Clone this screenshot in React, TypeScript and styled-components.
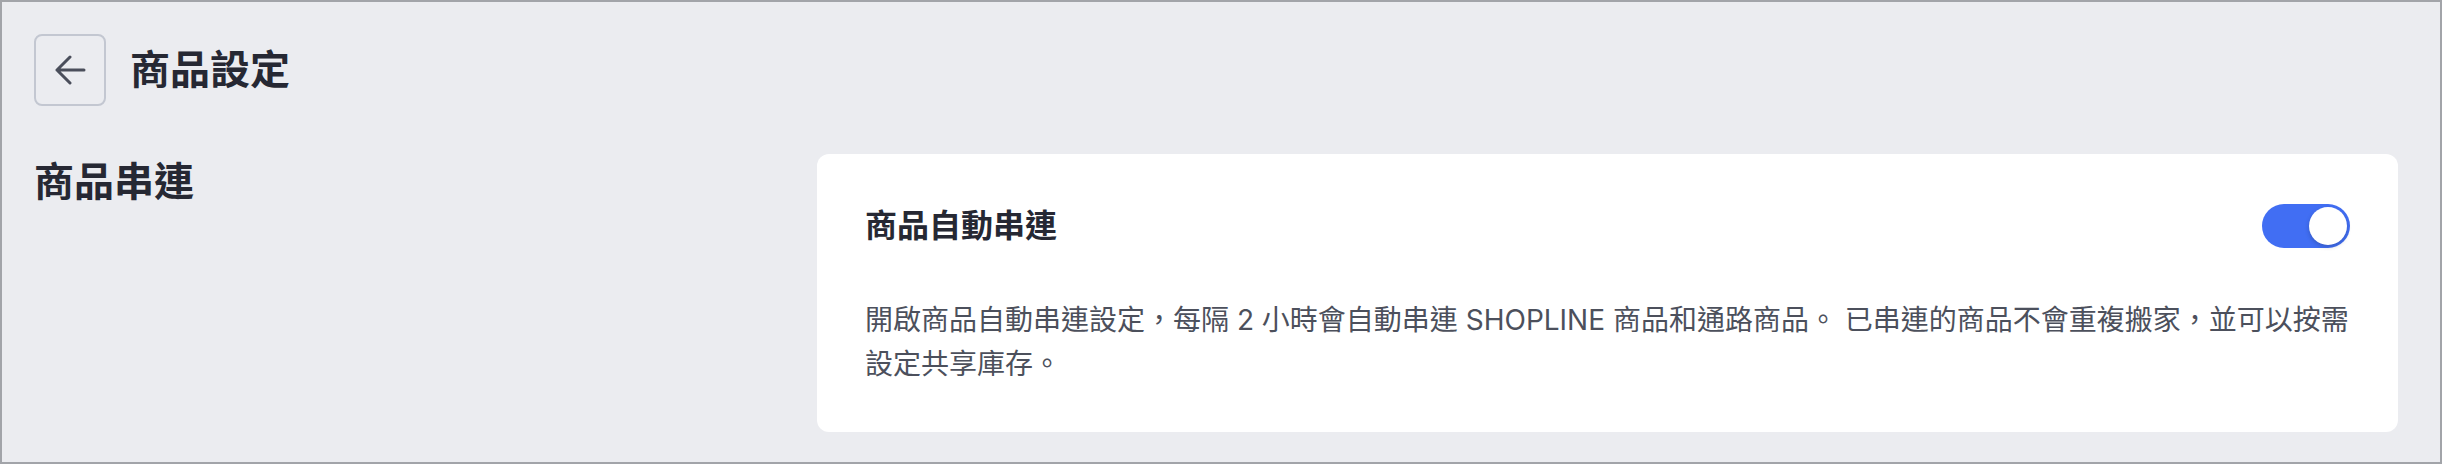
import React, { useState } from "react";
import styled, { createGlobalStyle } from "styled-components";

const GlobalStyle = createGlobalStyle`
  html, body {
    margin: 0;
    padding: 0;
    background: #ebecf0;
  }
  body {
    font-family: Inter, "Noto Sans CJK TC", "Noto Sans", sans-serif;
    -webkit-font-smoothing: antialiased;
  }
`;

const Frame = styled.div`
  box-sizing: border-box;
  width: 2442px;
  height: 464px;
  border: 2px solid #a2a4a9;
  background: #ebecf0;
  padding: 32px 42px 30px 32px;
  display: flex;
  flex-direction: column;
  gap: 48px;
`;

const Header = styled.div`
  display: flex;
  align-items: center;
  gap: 24px;
`;

const BackButton = styled.button`
  box-sizing: border-box;
  width: 72px;
  height: 72px;
  border: 2px solid #c3c7d1;
  border-radius: 8px;
  background: transparent;
  display: flex;
  align-items: center;
  justify-content: center;
  padding: 0;
  cursor: pointer;
  color: #4a4e5b;
`;

const PageTitle = styled.h1`
  margin: 0;
  font-size: 40px;
  line-height: 56px;
  font-weight: 600;
  color: #262833;
`;

const Section = styled.div`
  display: grid;
  grid-template-columns: 783px 1fr;
  align-items: start;
`;

const SectionLabel = styled.h2`
  margin: 0;
  font-size: 40px;
  line-height: 56px;
  font-weight: 600;
  color: #262833;
`;

const Card = styled.div`
  box-sizing: border-box;
  height: 278px;
  background: #ffffff;
  border-radius: 12px;
  padding: 48px 48px 46px;
`;

const CardHeader = styled.div`
  display: flex;
  align-items: center;
  justify-content: space-between;
  height: 48px;
`;

const CardTitle = styled.div`
  font-size: 32px;
  line-height: 48px;
  font-weight: 600;
  color: #262833;
`;

const Description = styled.p`
  margin: 48px 0 0;
  font-size: 28px;
  line-height: 44px;
  color: #4c505c;
`;

const Track = styled.button<{ $on: boolean }>`
  box-sizing: border-box;
  width: 88px;
  height: 44px;
  border: none;
  border-radius: 22px;
  padding: 3px;
  background: ${(p) => (p.$on ? "#416ef3" : "#c3c7d1")};
  display: flex;
  justify-content: ${(p) => (p.$on ? "flex-end" : "flex-start")};
  cursor: pointer;
`;

const Knob = styled.span`
  width: 38px;
  height: 38px;
  border-radius: 50%;
  background: #ffffff;
  box-shadow: 0 2px 4px rgba(20, 30, 60, 0.25);
`;

const ArrowLeft = () => (
  <svg width="32" height="30" viewBox="0 0 32 30" fill="none">
    <path
      d="M16 2 3 15l13 13M3 15h27"
      stroke="currentColor"
      strokeWidth="3"
      strokeLinecap="round"
      strokeLinejoin="round"
    />
  </svg>
);

export default function App() {
  const [autoLink, setAutoLink] = useState(true);

  return (
    <>
      <GlobalStyle />
      <Frame>
        <Header>
          <BackButton aria-label="返回">
            <ArrowLeft />
          </BackButton>
          <PageTitle>商品設定</PageTitle>
        </Header>
        <Section>
          <SectionLabel>商品串連</SectionLabel>
          <Card>
            <CardHeader>
              <CardTitle>商品自動串連</CardTitle>
              <Track
                $on={autoLink}
                role="switch"
                aria-checked={autoLink}
                onClick={() => setAutoLink((v) => !v)}
              >
                <Knob />
              </Track>
            </CardHeader>
            <Description>
              開啟商品自動串連設定，每隔 2 小時會自動串連 SHOPLINE
              商品和通路商品。 已串連的商品不會重複搬家，並可以按需設定共享庫存。
            </Description>
          </Card>
        </Section>
      </Frame>
    </>
  );
}
